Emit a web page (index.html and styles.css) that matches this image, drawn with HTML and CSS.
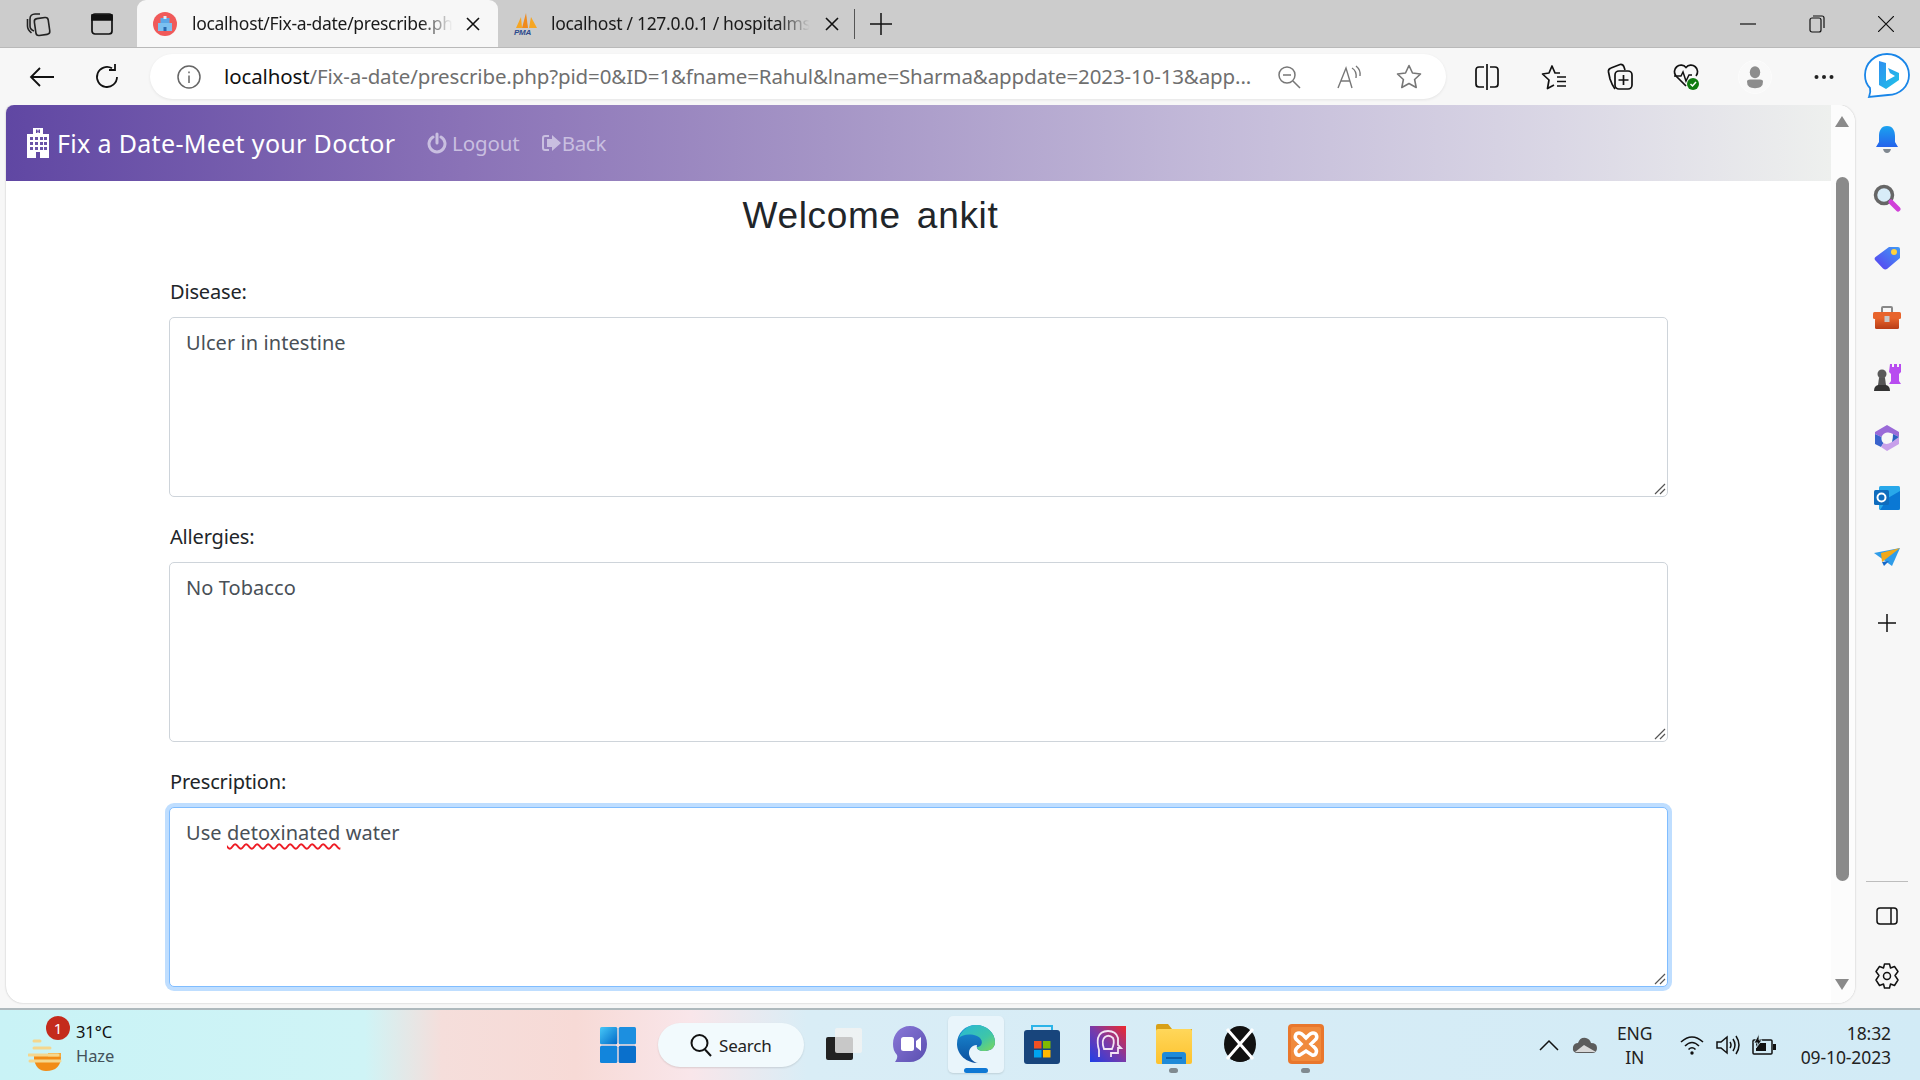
FILE: index.html
```html
<!DOCTYPE html>
<html lang="en">
<head>
<meta charset="utf-8">
<title>Fix a Date-Meet your Doctor</title>
<link rel="stylesheet" href="styles.css">
</head>
<body>
<svg class="defs" width="0" height="0" aria-hidden="true">
  <defs>
    <linearGradient id="gBell" x1="0" y1="0" x2="0" y2="1"><stop offset="0" stop-color="#1aa3f0"/><stop offset="1" stop-color="#2563eb"/></linearGradient>
    <linearGradient id="gTag" x1="1" y1="0" x2="0" y2="1"><stop offset="0" stop-color="#3f9bf5"/><stop offset="1" stop-color="#5b3df0"/></linearGradient>
    <linearGradient id="gBox" x1="0" y1="0" x2="0" y2="1"><stop offset="0" stop-color="#e8642c"/><stop offset="1" stop-color="#b83d16"/></linearGradient>
    <linearGradient id="gEdge" x1="0" y1="0" x2="1" y2="1"><stop offset="0" stop-color="#27b7d8"/><stop offset="0.6" stop-color="#3ec6a8"/><stop offset="1" stop-color="#7fd858"/></linearGradient>
    <linearGradient id="gEdge2" x1="0" y1="0" x2="0" y2="1"><stop offset="0" stop-color="#1a8fd6"/><stop offset="1" stop-color="#0c4f9e"/></linearGradient>
    <linearGradient id="gTeams" x1="0" y1="0" x2="1" y2="1"><stop offset="0" stop-color="#8a78d8"/><stop offset="1" stop-color="#5a4fb0"/></linearGradient>
    <linearGradient id="gPurple" x1="0" y1="1" x2="1" y2="0"><stop offset="0" stop-color="#1e3fe8"/><stop offset="0.5" stop-color="#7a3aa8"/><stop offset="1" stop-color="#f0282c"/></linearGradient>
    <linearGradient id="gFolder" x1="0" y1="0" x2="0" y2="1"><stop offset="0" stop-color="#ffd75a"/><stop offset="1" stop-color="#fdc22e"/></linearGradient>
    <linearGradient id="gStart" x1="0" y1="0" x2="1" y2="1"><stop offset="0" stop-color="#47c8f8"/><stop offset="1" stop-color="#0069c8"/></linearGradient>
    <linearGradient id="gBing" x1="0" y1="0" x2="1" y2="1"><stop offset="0" stop-color="#2f8ff0"/><stop offset="1" stop-color="#1fc4e8"/></linearGradient>
  </defs>
</svg>

<div class="window">
  <header class="tabstrip">
    <div class="strip-tool">
      <svg width="26" height="26" viewBox="0 0 26 26" fill="none" stroke="#222" stroke-width="1.6"><rect x="9" y="7" width="14" height="17" rx="3" transform="rotate(-8 16 15)"/><path d="M8 20 C5 19 4 17 4 15 V8 C4 5 6 3 9 3 h5 M5.500 22 C3 20 1.500 18 1.500 15 V8"/></svg>
    </div>
    <div class="strip-tool strip-tool-b">
      <svg width="24" height="24" viewBox="0 0 24 24" fill="none" stroke="#111" stroke-width="1.700"><rect x="2" y="2" width="20" height="20" rx="3"/><path d="M2 3 h20 v5 h-20z" fill="#111"/></svg>
    </div>
    <div class="tab tab-active">
      <svg class="fav" width="24" height="24" viewBox="0 0 24 24"><circle cx="12" cy="12" r="12" fill="#f05a5a"/><rect x="7.500" y="6" width="9" height="13" fill="#5aa7e8"/><rect x="5" y="11" width="14" height="8" fill="#7cc0f0"/><rect x="10.500" y="4" width="3" height="3" fill="#d8ecfa"/><rect x="10.500" y="15" width="3" height="4" fill="#2a6ab0"/></svg>
      <span class="tab-title">localhost/Fix-a-date/prescribe.ph</span>
      <svg class="tab-x" width="14" height="14" viewBox="0 0 14 14" stroke="#111" stroke-width="1.600"><path d="M1 1 L13 13 M13 1 L1 13"/></svg>
    </div>
    <div class="tab tab-idle">
      <svg class="fav" width="26" height="24" viewBox="0 0 26 24"><path d="M3 16 L8 5 L9 16z" fill="#f6a623"/><path d="M9 16 L13 1 L15 16z" fill="#f08a1c"/><path d="M16 16 L18 5 L24 16z" fill="#f6a623"/><text x="1" y="23" class="pma">PMA</text></svg>
      <span class="tab-title tab-title-b">localhost / 127.0.0.1 / hospitalms</span>
      <svg class="tab-x" width="14" height="14" viewBox="0 0 14 14" stroke="#111" stroke-width="1.600"><path d="M1 1 L13 13 M13 1 L1 13"/></svg>
    </div>
    <span class="tab-sep"></span>
    <svg class="tab-plus" width="22" height="22" viewBox="0 0 22 22" stroke="#111" stroke-width="1.500"><path d="M11 0 V22 M0 11 H22"/></svg>
    <div class="win-controls">
      <svg width="16" height="16" viewBox="0 0 16 16" stroke="#111" stroke-width="1.200"><path d="M0 8 H16"/></svg>
      <svg width="16" height="18" viewBox="0 0 16 18" fill="none" stroke="#111" stroke-width="1.200"><rect x="1" y="3" width="11" height="14" rx="2"/><path d="M4 1 H13 Q15 1 15 3 V13"/></svg>
      <svg width="16" height="16" viewBox="0 0 16 16" stroke="#111" stroke-width="1.200"><path d="M0 0 L16 16 M16 0 L0 16"/></svg>
    </div>
  </header>

  <nav class="toolbar">
    <svg class="tb-back" width="26" height="22" viewBox="0 0 26 22" fill="none" stroke="#111" stroke-width="1.800"><path d="M25 11 H2 M11 2 L2 11 L11 20"/></svg>
    <svg class="tb-reload" width="26" height="26" viewBox="0 0 26 26" fill="none" stroke="#111" stroke-width="1.800"><path d="M22 13 A10 10 0 1 1 17 4.300"/><path d="M18 0 V6 H12" transform="translate(2 0)"/></svg>
    <div class="addr">
      <svg width="24" height="24" viewBox="0 0 24 24" fill="none" stroke="#666" stroke-width="1.500"><circle cx="12" cy="12" r="11"/><path d="M12 10.500 V18 M12 6.500 V8.200"/></svg>
      <div class="url"><span class="url-host">localhost</span>/Fix-a-date/prescribe.php?pid=0&amp;ID=1&amp;fname=Rahul&amp;lname=Sharma&amp;appdate=2023-10-13&amp;app...</div>
      <svg class="addr-zoom" width="24" height="24" viewBox="0 0 24 24" fill="none" stroke="#777" stroke-width="1.500"><circle cx="10" cy="10" r="8"/><path d="M6 10 H14 M16 16 L23 23"/></svg>
      <svg class="addr-read" width="26" height="24" viewBox="0 0 26 24" fill="none" stroke="#777" stroke-width="1.400"><path d="M1 23 L9 3 L15 23 M4 16 H13"/><path d="M15 3 Q20 6 19 13 M19 1 Q24 5 23 11"/></svg>
      <svg class="addr-star" width="26" height="25" viewBox="0 0 26 25" fill="none" stroke="#777" stroke-width="1.600" stroke-linejoin="round"><path d="M13 1.500 L16.500 9 L24.500 10 L18.600 15.500 L20.200 23.500 L13 19.500 L5.800 23.500 L7.400 15.500 L1.500 10 L9.500 9z"/></svg>
    </div>
    <div class="tb-right">
      <svg width="24" height="26" viewBox="0 0 24 26" fill="none" stroke="#111" stroke-width="1.700"><path d="M9 3 H4 Q1 3 1 6 V20 Q1 23 4 23 H9 M15 3 H20 Q23 3 23 6 V20 Q23 23 20 23 H15"/><path d="M12 0 V26"/></svg>
      <svg width="26" height="26" viewBox="0 0 26 26" fill="none" stroke="#111" stroke-width="1.700" stroke-linejoin="round"><path d="M13 21 L6.500 24.500 L8 16 L1.500 10 L8 9 L11 2 L14 9 H19"/><path d="M16 13 H25 M16 17.500 H25 M16 22 H25"/></svg>
      <svg width="26" height="28" viewBox="0 0 26 28" fill="none" stroke="#111" stroke-width="1.700"><path d="M8 26 Q5 22 3 16 L1.500 9 Q1 6 4 5 L13 1.500 Q16 1 17 4 L18 7"/><rect x="8" y="8" width="17" height="18" rx="4"/><path d="M16.500 12 V22 M11.500 17 H21.500"/></svg>
      <svg width="26" height="28" viewBox="0 0 26 28"><path d="M13 23 L3 13 A6.500 6.500 0 0 1 13 4.500 A6.500 6.500 0 0 1 23 13" fill="none" stroke="#111" stroke-width="1.700"/><path d="M1 13 H8 L10 9 L13 18 L16 12 H19" fill="none" stroke="#111" stroke-width="1.500"/><circle cx="20" cy="21" r="6" fill="#107c10"/><path d="M17.500 21 L19.500 23 L23 19" fill="none" stroke="#fff" stroke-width="1.500"/></svg>
      <div class="avatar">
        <svg width="16" height="24" viewBox="0 0 20 28" fill="#8d8d8d"><ellipse cx="10" cy="8" rx="6.500" ry="7.500"/><path d="M0 20 Q0 17 4 17 H16 Q20 17 20 20 Q20 28 10 28 Q0 28 0 20z"/></svg>
      </div>
      <svg width="20" height="6" viewBox="0 0 20 6" fill="#222"><circle cx="2.500" cy="3" r="2"/><circle cx="10" cy="3" r="2"/><circle cx="17.500" cy="3" r="2"/></svg>
    </div>
    <svg class="tb-bing" width="46" height="46" viewBox="0 0 46 46"><path d="M23 1 C35 1 45 10 45 22 C45 33 36 42 24 42 L5 44 Q7 39 6 35 C2 31 1 27 1 22 C1 10 11 1 23 1z" fill="#fff" stroke="#1a86e8" stroke-width="1.800"/><path d="M15 8 L22 10 V28 L31 23 L26 20 L24 15 L35 20 V27 L22 36 L15 32z" fill="url(#gBing)"/></svg>
  </nav>

  <div class="middle">
    <main class="viewport">
      <div class="page">
        <div class="navbar">
          <div class="brand">
            <svg width="22" height="30" viewBox="0 0 22 30" fill="#fff"><path d="M6 0 H16 V6 H22 V30 H13 V24 H9 V30 H0 V6 H6z M9 1.500 V5 H10.500 V3.800 H11.500 V5 H13 V1.500 H11.500 V2.700 H10.500 V1.500z" fill-rule="evenodd"/><g fill="#6a53a8"><rect x="3" y="9" width="3" height="3"/><rect x="8" y="9" width="3" height="3"/><rect x="13" y="9" width="3" height="3"/><rect x="17" y="9" width="3" height="3"/><rect x="3" y="14" width="3" height="3"/><rect x="8" y="14" width="3" height="3"/><rect x="13" y="14" width="3" height="3"/><rect x="17" y="14" width="3" height="3"/><rect x="3" y="19" width="3" height="3"/><rect x="8" y="19" width="3" height="3"/><rect x="13" y="19" width="3" height="3"/><rect x="17" y="19" width="3" height="3"/></g></svg>
            <span>Fix a Date-Meet your Doctor</span>
          </div>
          <a class="nav-link">
            <svg width="20" height="22" viewBox="0 0 20 22" fill="none" stroke="#c9bfe0" stroke-width="3" stroke-linecap="round"><path d="M6 5 A8 8 0 1 0 14 5"/><path d="M10 2 V11"/></svg>
            <span>Logout</span>
          </a>
          <a class="nav-link nav-link-b">
            <svg width="20" height="20" viewBox="0 0 20 20" fill="none" stroke="#c9bfe0" stroke-width="2"><path d="M7 3 H3 Q1 3 1 5 V15 Q1 17 3 17 H7"/><path d="M10 2 L19 10 L10 18 V14 H5 V6 H10z" fill="#c9bfe0" stroke="none"/></svg>
            <span>Back</span>
          </a>
        </div>

        <h2 class="welcome">Welcome&nbsp; ankit</h2>

        <form class="form">
          <div class="field">
            <div class="label">Disease:</div>
            <div class="area">Ulcer in intestine<svg class="grip" width="12" height="12" viewBox="0 0 12 12" stroke="#555" stroke-width="1.200"><path d="M1 11 L11 1 M6 11 L11 6"/></svg></div>
          </div>
          <div class="field">
            <div class="label">Allergies:</div>
            <div class="area">No Tobacco<svg class="grip" width="12" height="12" viewBox="0 0 12 12" stroke="#555" stroke-width="1.200"><path d="M1 11 L11 1 M6 11 L11 6"/></svg></div>
          </div>
          <div class="field">
            <div class="label">Prescription:</div>
            <div class="area area-focus">Use <span class="misspelt">detoxinated</span> water<svg class="grip" width="12" height="12" viewBox="0 0 12 12" stroke="#555" stroke-width="1.200"><path d="M1 11 L11 1 M6 11 L11 6"/></svg></div>
          </div>
        </form>
      </div>
      <div class="scrollbar">
        <span class="sb-up"></span>
        <span class="sb-thumb"></span>
        <span class="sb-down"></span>
      </div>
    </main>

    <aside class="sidebar">
      <div class="side-slot side-bell"><svg width="24" height="28" viewBox="0 0 24 28"><path d="M12 0 C18 0 20 5 20 10 V16 L23 21 H1 L4 16 V10 C4 5 6 0 12 0z" fill="url(#gBell)"/><path d="M8 23 H16 Q15 27 12 27 Q9 27 8 23z" fill="#808890"/></svg></div>
      <div class="side-slot"><svg width="28" height="28" viewBox="0 0 28 28"><circle cx="11" cy="11" r="8.500" fill="#d8ecf8" stroke="#666" stroke-width="3.500"/><path d="M18 18 L25 25" stroke="#d040d8" stroke-width="5" stroke-linecap="round"/></svg></div>
      <div class="side-slot"><svg width="26" height="24" viewBox="0 0 26 24"><path d="M15 1 H24 Q26 1 26 3 V12 L13 23 Q11 24 9 22.500 L1 14 Q0 12 1.500 11z" fill="url(#gTag)"/><circle cx="20" cy="6" r="3" fill="#ffd23c"/></svg></div>
      <div class="side-slot"><svg width="28" height="24" viewBox="0 0 28 24"><path d="M9 6 V2 Q9 1 10 1 H18 Q19 1 19 2 V6" fill="none" stroke="#888" stroke-width="2"/><rect x="0" y="6" width="28" height="7" rx="1.500" fill="#e8642c"/><rect x="2" y="12" width="24" height="11" rx="1.500" fill="url(#gBox)"/><rect x="11.500" y="10" width="5" height="6" fill="#c8c8c8"/></svg></div>
      <div class="side-slot"><svg width="28" height="28" viewBox="0 0 28 28"><path d="M17 0 H19 V3 H21 V0 H24 V3 H26 V0 H28 V8 L26 10 V17 L28 20 H16 L18 17 V10 L16 8z" fill="#b84cf0"/><circle cx="9" cy="10" r="4.500" fill="#5a5a5a"/><path d="M6 14 H12 L13 21 H5z" fill="#555"/><path d="M1 27 Q1 22 5 21 H13 Q17 22 17 27z" fill="#333"/></svg></div>
      <div class="side-slot"><svg width="26" height="26" viewBox="0 0 26 26"><path d="M13 0 L25 7 V12 L19 9 Q16 7 13 7.500 Q9 8 7.500 12 L1 9 V7z" fill="#9a6ad8"/><path d="M1 9 L7.500 12 Q7 16 9.500 18 L7 22 L1 19z" fill="#3a63cc"/><path d="M25 12 V19 L13 26 L7 22 L9.500 18 Q13 20 17 17.500 L25 12z" fill="#c8a0ea"/><path d="M19 9 L25 12 L18 17 Q19 13 19 9z" fill="#2c5fc0"/></svg></div>
      <div class="side-slot"><svg width="26" height="24" viewBox="0 0 26 24"><rect x="5" y="0" width="21" height="24" rx="1.500" fill="#28a8ea"/><path d="M14 12 L26 5 V22 Q26 24 24 24 H6z" fill="#0a78d4"/><rect x="0" y="4" width="15" height="15" rx="1.500" fill="#0f6cbd"/><circle cx="7.500" cy="11.500" r="4" fill="none" stroke="#fff" stroke-width="2"/></svg></div>
      <div class="side-slot"><svg width="26" height="20" viewBox="0 0 26 20"><path d="M0 5 L26 0 L18 18z" fill="#2f9ce8"/><path d="M8 14 L26 0 L7 5z" fill="#f0a818"/><path d="M8 14 L10 18 L15 13z" fill="#1668c8"/></svg></div>
      <div class="side-slot side-plus"><svg width="18" height="18" viewBox="0 0 18 18" stroke="#111" stroke-width="1.500"><path d="M9 0 V18 M0 9 H18"/></svg></div>
      <div class="side-bottom">
        <span class="side-rule"></span>
        <div class="side-slot"><svg width="22" height="18" viewBox="0 0 22 18" fill="none" stroke="#111" stroke-width="1.500"><rect x="1" y="1" width="20" height="16" rx="3"/><path d="M15 1 V17"/></svg></div>
        <div class="side-slot"><svg width="24" height="26" viewBox="0 0 24 26" fill="none" stroke="#111" stroke-width="1.500" stroke-linejoin="round"><path d="M9.500 1 H14.500 L15.500 5 L19.500 3.500 L23 8.500 L20 12.500 L23 17 L19.500 22.500 L15.500 21 L14.500 25 H9.500 L8.500 21 L4.500 22.500 L1 17 L4 12.500 L1 8.500 L4.500 3.500 L8.500 5z"/><circle cx="12" cy="13" r="3.500"/></svg></div>
      </div>
    </aside>
  </div>

  <footer class="taskbar">
    <div class="weather">
      <div class="w-icon">
        <svg width="34" height="42" viewBox="0 0 34 42"><path d="M6 25 H33 Q33 40 18 40 Q8 40 6 28z" fill="#f28c16"/><path d="M20 22 H33 V26 H20z" fill="#f6a83a"/><path d="M6 10 H12 M6 17 H22 M1 24 H30 M2 30 H32" stroke="#f5d78e" stroke-width="3" stroke-linecap="round"/></svg>
        <span class="w-badge">1</span>
      </div>
      <div class="w-text"><span>31°C</span><span class="w-sub">Haze</span></div>
    </div>
    <div class="dock">
      <svg width="36" height="36" viewBox="0 0 36 36"><rect x="0" y="0" width="17.300" height="17.300" rx="1.500" fill="url(#gStart)"/><rect x="18.700" y="0" width="17.300" height="17.300" rx="1.500" fill="#1c8fe0"/><rect x="0" y="18.700" width="17.300" height="17.300" rx="1.500" fill="#1285dc"/><rect x="18.700" y="18.700" width="17.300" height="17.300" rx="1.500" fill="#0a70cc"/></svg>
      <div class="search-pill">
        <svg width="22" height="24" viewBox="0 0 22 24" fill="none" stroke="#111" stroke-width="2"><circle cx="9.500" cy="10" r="8"/><path d="M15 16.500 L21 23"/></svg>
        <span>Search</span>
      </div>
      <div class="dock-app"><svg width="36" height="32" viewBox="0 0 36 32"><rect x="0" y="9" width="27" height="23" rx="2" fill="#222"/><rect x="9" y="0" width="27" height="25" rx="2" fill="#f2f2f2" opacity=".8"/></svg></div>
      <div class="dock-app"><svg width="34" height="36" viewBox="0 0 34 36"><path d="M17 0 C27 0 34 8 34 18 C34 28 27 36 17 36 L2 36 Q5 32 4 29 C1 26 0 22 0 18 C0 8 7 0 17 0z" fill="url(#gTeams)"/><rect x="8" y="11" width="13" height="14" rx="2.500" fill="#fff"/><path d="M23 15 L28 11 V25 L23 21z" fill="#fff"/></svg></div>
      <div class="dock-app dock-active"><svg width="38" height="38" viewBox="0 0 38 38"><path d="M19 0 C30 0 38 8 38 17 C38 24 32 26 27 26 C21 26 19 23 20 20 C14 20 10 26 13 32 C15 36 19 38 21 38 C10 38 0 30 0 19 C0 8 8 0 19 0z" fill="url(#gEdge2)"/><path d="M2 13 C5 4 12 0 19 0 C30 0 38 8 38 17 C38 24 32 26 27 26 C22 26 20 24 20 22 C26 22 27 14 20 11 C12 8 5 10 2 13z" fill="url(#gEdge)"/></svg><span class="dock-pill"></span></div>
      <div class="dock-app"><svg width="36" height="40" viewBox="0 0 36 40"><path d="M8 6 V2 H28 V6" fill="none" stroke="#2cb4e8" stroke-width="2"/><rect x="0" y="6" width="36" height="34" rx="3" fill="#18457c"/><rect x="10" y="17" width="7.500" height="7.500" fill="#f25022"/><rect x="19" y="17" width="7.500" height="7.500" fill="#7fba00"/><rect x="10" y="26" width="7.500" height="7.500" fill="#00a4ef"/><rect x="19" y="26" width="7.500" height="7.500" fill="#ffb900"/></svg></div>
      <div class="dock-app"><svg width="36" height="36" viewBox="0 0 36 36"><rect width="36" height="36" fill="url(#gPurple)"/><path d="M9 31 V24 Q7 17 8 12 Q10 5 18 5 Q26 5 28 12 V19 L31 22 H28 V27 H21 V31" fill="none" stroke="#f2e4f4" stroke-width="1.800"/><path d="M14 23 Q11 14 15 11 Q19 8 23 12 Q25 16 22 23z" fill="none" stroke="#f2e4f4" stroke-width="1.800"/></svg></div>
      <div class="dock-app"><svg width="36" height="40" viewBox="0 0 36 40"><path d="M0 2 Q0 0 2 0 H12 L16 5 H36 V12 H0z" fill="#d8a018"/><rect y="5" width="36" height="35" rx="2" fill="url(#gFolder)"/><path d="M6 40 V31 Q6 28 9 28 H27 Q30 28 30 31 V40z" fill="#1f8ad8"/><rect x="10" y="33" width="16" height="2" fill="#0c5ea8"/></svg><span class="dock-dot"></span></div>
      <div class="dock-app"><svg width="32" height="36" viewBox="0 0 32 36"><ellipse cx="16" cy="18" rx="16" ry="18" fill="#111"/><path d="M3 3 L29 33 M29 3 L3 33" stroke="#fff" stroke-width="3"/><path d="M16 13 L8 4 Q16 -1 24 4z M16 22 L6 33 Q16 38 26 33z" fill="#111"/></svg></div>
      <div class="dock-app"><svg width="36" height="40" viewBox="0 0 36 40"><rect width="36" height="40" rx="4" fill="#e9772c"/><rect x="3" y="3" width="30" height="34" rx="2" fill="#f08a3c"/><path d="M11 9 C7 9 6 14 9 16 L13 20 L9 24 C6 27 8 32 12 31 L18 27 L24 31 C28 32 30 27 27 24 L23 20 L27 16 C30 14 29 9 25 9 C22 9 20 12 18 14 C16 12 14 9 11 9z" fill="none" stroke="#fff" stroke-width="3.500"/></svg><span class="dock-dot"></span></div>
    </div>
    <div class="tray">
      <svg class="t-chev" width="20" height="12" viewBox="0 0 20 12" fill="none" stroke="#111" stroke-width="1.500"><path d="M1 11 L10 2 L19 11"/></svg>
      <svg class="t-cloud" width="26" height="18" viewBox="0 0 26 18"><path d="M6 17 Q0 17 1 11 Q2 7 6 7 Q8 1 14 2 Q18 3 19 7 Q25 7 25 12 Q25 17 20 17z" fill="#5c5c5c"/><path d="M3 16 L12 9 L24 16z" fill="#d8d8d8"/></svg>
      <div class="t-lang"><span>ENG</span><span>IN</span></div>
      <svg class="t-wifi" width="24" height="20" viewBox="0 0 24 20" fill="none" stroke="#111" stroke-width="1.600"><path d="M1 7 Q12 -3 23 7 M5 11 Q12 4 19 11 M8.500 14.500 Q12 11 15.500 14.500"/><circle cx="12" cy="18" r="1.700" fill="#111" stroke="none"/></svg>
      <svg class="t-vol" width="24" height="20" viewBox="0 0 24 20" fill="none" stroke="#111" stroke-width="1.500"><path d="M1 7 H5 L11 2 V18 L5 13 H1z"/><path d="M14 7 Q16 10 14 13 M17 4 Q21 10 17 16 M20 1 Q26 10 20 19"/></svg>
      <svg class="t-bat" width="24" height="22" viewBox="0 0 24 22"><path d="M1 7 Q1 6 2 6 H19 Q20 6 20 7 V19 Q20 20 19 20 H2 Q1 20 1 19z" fill="none" stroke="#111" stroke-width="1.500"/><path d="M4 9 H14 V17 H4z" fill="#111"/><rect x="21" y="10" width="3" height="6" fill="#111"/><path d="M7 0 L2 9 H6 L4 14 L10 6 H7z" fill="#111" stroke="#d3edf8" stroke-width=".8"/></svg>
      <div class="t-clock"><span>18:32</span><span>09-10-2023</span></div>
    </div>
  </footer>
</div>
</body>
</html>
```

FILE: styles.css
```css
* { box-sizing: border-box; }
html, body { margin: 0; height: 100%; overflow: hidden; }
body { font-family: "Noto Sans", "Open Sans", sans-serif; color: #212529; background: #f7f7f7; }
.defs { position: absolute; }

.window { width: 1920px; height: 1080px; display: flex; flex-direction: column; }

/* tab strip */
.tabstrip { height: 48px; flex: none; background: #cccccc; display: flex; align-items: center; border-bottom: 1px solid #b9b9b9; }
.strip-tool { width: 26px; margin-left: 26px; display: flex; justify-content: center; }
.strip-tool-b { margin-left: 38px; width: 24px; }
.tab { height: 47px; display: flex; align-items: center; font-size: 17.500px; letter-spacing: -.3px; color: #1a1a1a; white-space: nowrap; }
.tab-active { width: 361px; margin-left: 23px; background: #f7f7f7; border-radius: 9px 9px 0 0; padding-left: 16px; }
.tab-idle { width: 352px; padding-left: 15px; }
.fav { flex: none; }
.tab-title { width: 266px; margin: -2px -5px 0 15px; white-space: nowrap; -webkit-mask-image: linear-gradient(90deg, #000 86%, transparent 98%); mask-image: linear-gradient(90deg, #000 86%, transparent 98%); }
.tab-title-b { width: 264px; margin: -2px -3px 0 12px; }
.tab-x { margin-left: 13px; flex: none; }
.tab-sep { width: 1px; height: 30px; background: #555; margin-left: 4px; }
.tab-plus { margin-left: 15px; }
.pma { font: italic 700 8px "Liberation Sans", sans-serif; fill: #2b4a8c; }
.win-controls { margin-left: auto; display: flex; align-items: center; gap: 53px; padding-right: 26px; }

/* toolbar */
.toolbar { height: 57px; flex: none; background: #f7f7f7; display: flex; align-items: center; position: relative; }
.tb-back { margin-left: 29px; flex: none; }
.tb-reload { margin-left: 40px; flex: none; }
.addr { width: 1296px; height: 45px; margin-left: 29px; background: #fff; border-radius: 23px; display: flex; align-items: center; padding-left: 27px; box-shadow: 0 1px 3px rgba(0,0,0,.08); flex: none; }
.url { width: 1040px; margin: -2px 0 0 23px; font-size: 20.500px; letter-spacing: -.13px; color: #6f6f6f; white-space: nowrap; }
.url-host { color: #111; }
.addr-zoom { margin-left: 13px; flex: none; }
.addr-read { margin-left: 36px; flex: none; }
.addr-star { margin-left: 33px; flex: none; }
.tb-right { display: flex; align-items: center; margin-left: 29px; flex: none; }
.tb-right > svg:nth-child(2) { margin-left: 42px; }
.tb-right > svg:nth-child(3) { margin-left: 40px; }
.tb-right > svg:nth-child(4) { margin-left: 40px; }
.avatar { width: 34px; height: 34px; margin-left: 39px; display: flex; align-items: center; justify-content: center; border-radius: 50%; background: #f9f9f9; border: 1px solid #fcfcfc; }
.tb-right > svg:nth-child(6) { margin-left: 42px; }
.tb-bing { position: absolute; left: 1864px; top: 5px; }

/* viewport */
.middle { flex: none; height: 903px; display: flex; padding-left: 6px; }
.viewport { width: 1849px; height: 898px; background: #fff; border-radius: 8px 17px 17px 17px; overflow: hidden; display: flex; box-shadow: 0 0 2px rgba(0,0,0,.25); }
.page { width: 1825px; flex: none; }
.navbar { height: 76px; background: linear-gradient(90deg, #6047a3 0%, #8a72b7 25%, #a595c6 45%, #c3bad9 66%, #dad7e5 85%, #eef0ee 100%); display: flex; align-items: center; padding-left: 21px; color: #fff; }
.brand { display: flex; align-items: center; gap: 8px; font-size: 25px; letter-spacing: .33px; white-space: nowrap; width: 400px; flex: none; }
.nav-link { display: flex; align-items: center; font-size: 20.500px; color: #c9bfe0; gap: 5px; letter-spacing: -.1px; }
.nav-link-b { margin-left: 22px; gap: 0; letter-spacing: -.3px; }
.welcome { margin: 0; padding: 10px 96px 0 0; height: 81px; text-align: center; font: 400 37px/50px "Liberation Sans", Arimo, sans-serif; letter-spacing: .7px; word-spacing: -3px; color: #212529; }
.form { padding: 15px 163px 0; display: flex; flex-direction: column; gap: 25px; }
.field { display: flex; flex-direction: column; gap: 10px; }
.label { font-size: 20px; line-height: 30px; letter-spacing: -.17px; color: #212529; padding-left: 1px; }
.area { position: relative; height: 180px; border: 1px solid #ced4da; border-radius: 5px; padding: 10px 16px; font-size: 20px; line-height: 30px; letter-spacing: .07px; color: #495057; background: #fff; }
.area-focus { border-color: #80bdff; box-shadow: 0 0 0 4px #bfdeff; }
.misspelt { text-decoration: underline wavy #ee1c25 1.5px; text-underline-offset: 3px; }
.grip { position: absolute; right: 1px; bottom: 1px; }
.scrollbar { width: 24px; flex: none; background: #fcfcfc; position: relative; display: flex; flex-direction: column; align-items: center; padding-top: 11px; }
.sb-up { width: 0; height: 0; border: 7px solid transparent; border-top: 0; border-bottom: 11px solid #8a8a8a; margin-right: 2px; }
.sb-thumb { width: 13px; height: 704px; border-radius: 7px; background: #8a8a8a; margin: 50px 2px 0 0; }
.sb-down { width: 0; height: 0; border: 7px solid transparent; border-bottom: 0; border-top: 11px solid #8a8a8a; margin: 98px 2px 0 0; }

/* sidebar */
.sidebar { flex: 1; display: flex; flex-direction: column; align-items: center; padding: 3px 2px 0 0; height: 898px; }
.side-slot { height: 60px; width: 63px; flex: none; display: flex; align-items: center; justify-content: center; }
.side-bell { padding-top: 3px; }
.side-plus { margin-top: 5px; }
.side-bottom { margin-top: auto; display: flex; flex-direction: column; align-items: center; margin-bottom: -3px; }
.side-rule { width: 42px; height: 1px; background: #bdbdbd; margin-bottom: 4px; }

/* taskbar */
.taskbar { flex: none; height: 72px; position: relative; display: flex; align-items: center; border-top: 2px solid #aeb9bd; background: linear-gradient(90deg, #c9f3f6 0%, #cff4f6 19%, #f5dedb 23%, #f7dad6 30%, #f9e6ea 36%, #d9edf6 42%, #d2ebf6 100%); }
.weather { display: flex; margin-left: 28px; width: 572px; flex: none; }
.w-icon { position: relative; width: 48px; height: 44px; padding-top: 8px; }
.w-badge { position: absolute; left: 18px; top: -7px; width: 24px; height: 24px; border-radius: 50%; background: #c42b1c; color: #fff; font-size: 15px; line-height: 24px; text-align: center; }
.w-text { display: flex; flex-direction: column; font-size: 16.500px; line-height: 24px; letter-spacing: -.1px; margin-top: -3px; color: #111; }
.w-sub { color: #44525a; }
.dock { display: flex; align-items: center; }
.search-pill { width: 146px; height: 44px; margin-left: 22px; border-radius: 22px; background: #f2fafd; box-shadow: 0 1px 2px rgba(0,0,0,.12); display: flex; align-items: center; padding-left: 32px; gap: 7px; font-size: 17px; color: #222; letter-spacing: -.2px; }
.dock-app { width: 66px; height: 57px; flex: none; display: flex; align-items: center; justify-content: center; position: relative; margin-top: -2px; }
.search-pill + .dock-app { margin-left: 7px; }
.dock-active { width: 56px; margin: -2px 5px 0; background: #e9f5fb; border-radius: 5px; box-shadow: 0 1px 2px rgba(0,0,0,.12); }
.dock-pill { position: absolute; bottom: 0; left: 16px; width: 24px; height: 5px; border-radius: 3px; background: #0f78d4; }
.dock-dot { position: absolute; bottom: 0; left: 28px; width: 9px; height: 5px; border-radius: 3px; background: #808a90; }
.tray { position: absolute; right: 29px; top: 0; bottom: 0; display: flex; align-items: center; }
.t-lang { display: flex; flex-direction: column; align-items: center; margin-left: 12px; width: 50px; font-size: 17.500px; line-height: 24px; letter-spacing: -.2px; color: #222; }
.t-cloud { margin-left: 13px; }
.t-wifi { margin-left: 20px; }
.t-vol { margin-left: 12px; }
.t-bat { margin-left: 12px; }
.t-clock { display: flex; flex-direction: column; align-items: flex-end; margin-left: 25px; font-size: 17.500px; line-height: 24px; letter-spacing: -.1px; color: #222; }
```
